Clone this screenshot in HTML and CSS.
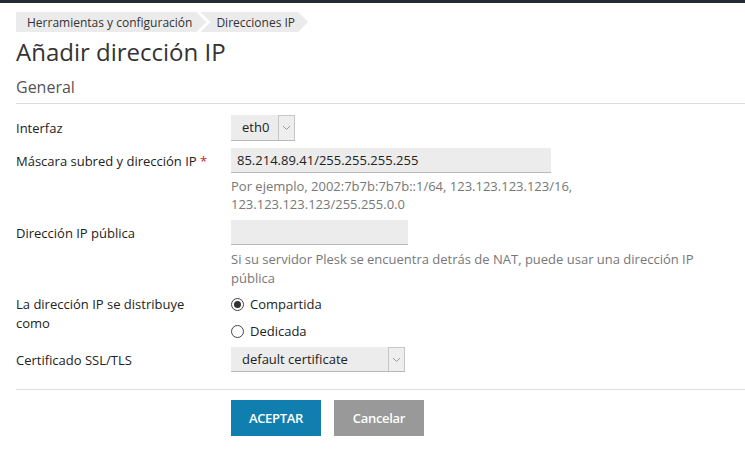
FILE: index.html
```html
<!DOCTYPE html>
<html lang="es">
<head>
<meta charset="utf-8">
<title>Añadir dirección IP</title>
<link rel="stylesheet" href="styles.css">
</head>
<body>
<div class="topbar"></div>
<main class="page">
  <nav class="crumbs">
    <span class="crumb crumb-first">Herramientas y configuración</span>
    <span class="crumb">Direcciones IP</span>
  </nav>
  <h1 class="title">Añadir dirección IP</h1>
  <h2 class="section">General</h2>

  <form class="form">
    <div class="row">
      <label class="label">Interfaz</label>
      <div class="field">
        <div class="select select-small">
          <span class="select-value">eth0</span>
          <span class="select-arrow"><svg width="9" height="6" viewBox="0 0 9 6"><path d="M1 1l3.5 3.5L8 1" fill="none" stroke="#999" stroke-width="1"/></svg></span>
        </div>
      </div>
    </div>

    <div class="row">
      <label class="label">Máscara subred y dirección IP <span class="req">*</span></label>
      <div class="field">
        <div class="input input-wide">85.214.89.41/255.255.255.255</div>
        <p class="hint">Por ejemplo, 2002:7b7b:7b7b::1/64, 123.123.123.123/16,<br>123.123.123.123/255.255.0.0</p>
      </div>
    </div>

    <div class="row">
      <label class="label">Dirección IP pública</label>
      <div class="field">
        <div class="input input-mid"></div>
        <p class="hint hint-public">Si su servidor Plesk se encuentra detrás de NAT, puede usar una dirección IP pública</p>
      </div>
    </div>

    <div class="row">
      <label class="label label-wrap">La dirección IP se distribuye como</label>
      <div class="field radios">
        <label class="radio"><input type="radio" name="dist" checked><span>Compartida</span></label>
        <label class="radio"><input type="radio" name="dist"><span>Dedicada</span></label>
      </div>
    </div>

    <div class="row">
      <label class="label">Certificado SSL/TLS</label>
      <div class="field">
        <div class="select select-cert">
          <span class="select-value">default certificate</span>
          <span class="select-arrow"><svg width="9" height="6" viewBox="0 0 9 6"><path d="M1 1l3.5 3.5L8 1" fill="none" stroke="#999" stroke-width="1"/></svg></span>
        </div>
      </div>
    </div>

    <div class="actions">
      <button type="button" class="btn btn-primary">ACEPTAR</button>
      <button type="button" class="btn btn-cancel">Cancelar</button>
    </div>
  </form>
</main>
</body>
</html>
```

FILE: styles.css
```css
* { box-sizing: border-box; }

html, body {
  margin: 0;
  background: #fff;
}

body {
  font-family: "Open Sans", "Liberation Sans", sans-serif;
  font-size: 13px;
  color: #222;
}

.topbar {
  height: 3px;
  background: #232c35;
}

.page {
  padding: 9px 0 0 16px;
}

/* breadcrumb chevrons */
.crumbs {
  display: flex;
  height: 20px;
}

.crumb {
  display: flex;
  align-items: center;
  height: 20px;
  background: #ebebeb;
  font-size: 12px;
  color: #333;
  padding: 0 13px 0 16px;
  margin-left: -6px;
  clip-path: polygon(0 0, calc(100% - 10px) 0, 100% 50%, calc(100% - 10px) 100%, 0 100%, 10px 50%);
}

.crumb-first {
  margin-left: 0;
  padding-left: 11px;
  padding-right: 14px;
  clip-path: polygon(0 0, calc(100% - 10px) 0, 100% 50%, calc(100% - 10px) 100%, 0 100%);
}

.title {
  margin: 4px 0 0;
  font-size: 24px;
  font-weight: 400;
  line-height: 32px;
  color: #333;
}

.section {
  margin: 8px 0 0;
  font-size: 16px;
  font-weight: 400;
  line-height: 22px;
  color: #555;
  padding-bottom: 5px;
  border-bottom: 1px solid #ddd;
}

.form {
  padding-top: 11px;
}

.row {
  display: grid;
  grid-template-columns: 215px 1fr;
  margin-bottom: 7px;
}

.label {
  padding-top: 4px;
  line-height: 18px;
  color: #222;
}

.label-wrap {
  width: 180px;
  padding-top: 1px;
  line-height: 19px;
}

.req {
  color: #d02020;
}

.field {
  min-width: 0;
}

.input {
  height: 25px;
  background: #ececec;
  border-bottom: 1px solid #b9b9b9;
  padding: 0 6px;
  line-height: 25px;
  color: #222;
}

.input-wide { width: 320px; }
.input-mid { width: 177px; }

.hint {
  margin: 4px 0 0;
  line-height: 18px;
  color: #777;
  width: 500px;
}

.hint-public {
  margin-top: 5px;
  line-height: 18.5px;
}

.select {
  display: flex;
  height: 26px;
  background: #ececec;
  border-bottom: 1px solid #b9b9b9;
}

.select-small { width: 64px; }
.select-cert { width: 174px; height: 25px; }

.select-value {
  flex: 1;
  padding-left: 11px;
  line-height: 25px;
  color: #222;
}

.select-arrow {
  width: 17px;
  display: flex;
  align-items: center;
  justify-content: center;
  border: 1px solid #c6c6c6;
  border-bottom: 0;
  background: #eee;
}

.radios {
  display: flex;
  flex-direction: column;
  gap: 9px;
  padding-top: 1px;
}

.radio {
  display: flex;
  align-items: center;
  height: 18px;
  line-height: 18px;
  color: #222;
}

.radio input {
  appearance: none;
  -webkit-appearance: none;
  margin: 0 6px 0 0;
  width: 13px;
  height: 13px;
  border: 1px solid #444;
  border-radius: 50%;
  background: #fff;
  display: grid;
  place-items: center;
}

.radio input:checked::after {
  content: "";
  width: 7px;
  height: 7px;
  border-radius: 50%;
  background: #333;
}

.actions {
  border-top: 1px solid #ddd;
  margin-top: 17px;
  padding: 10px 0 0 215px;
  display: flex;
  gap: 13px;
}

.btn {
  width: 90px;
  height: 36px;
  border: 0;
  font-family: "Open Sans", "Liberation Sans", sans-serif;
  font-size: 13px;
  font-weight: 600;
  color: #fff;
  letter-spacing: -0.3px;
  cursor: pointer;
}

.btn-primary { background: #107fb0; }
.btn-cancel { background: #999; }
```
